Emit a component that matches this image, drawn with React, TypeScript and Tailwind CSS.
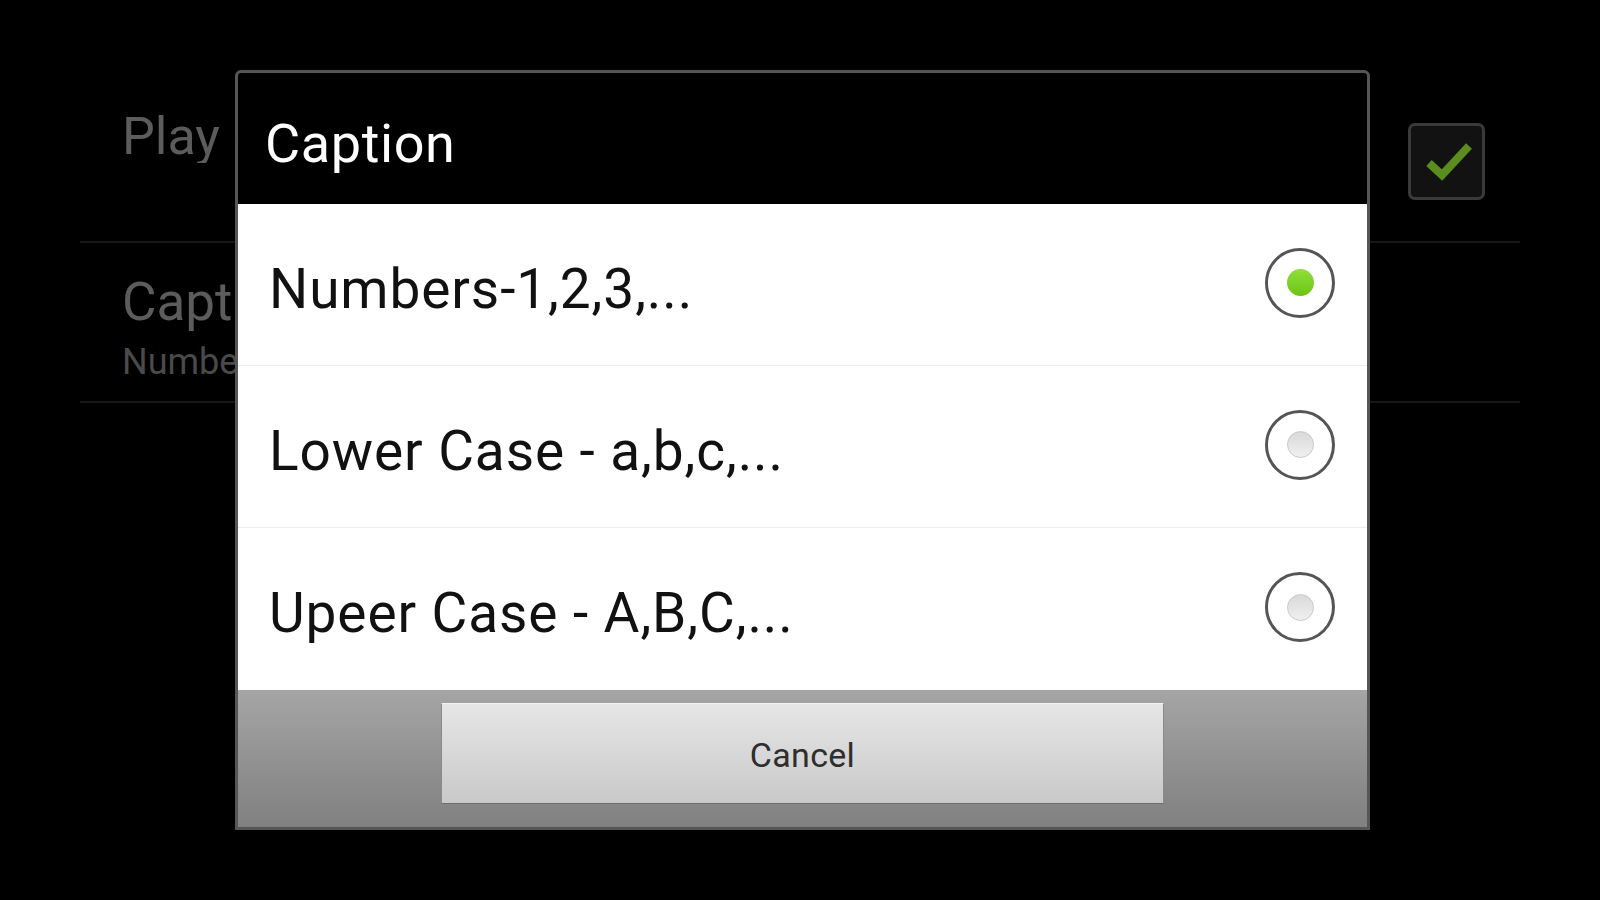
import React from "react";

const options = ["Numbers-1,2,3,...", "Lower Case - a,b,c,...", "Upeer Case - A,B,C,..."];

function Radio({ checked }: { checked: boolean }) {
  return (
    <div className="flex h-[70px] w-[70px] items-center justify-center rounded-full border-[3px] border-[#555] bg-white">
      {checked ? (
        <div className="h-[27px] w-[27px] rounded-full bg-gradient-to-b from-[#8fe03a] to-[#6cc410]" />
      ) : (
        <div className="h-[27px] w-[27px] rounded-full border border-[#c8c8c8] bg-gradient-to-b from-[#d9d9d9] to-[#f0f0f0]" />
      )}
    </div>
  );
}

function CheckBox() {
  return (
    <div className="flex h-[77px] w-[77px] items-center justify-center rounded-[7px] border-[3px] border-[#3a3a3a] bg-[#121212]">
      <svg width="71" height="71" viewBox="0 0 71 71">
        <polyline
          points="18,37 31,49 58,20"
          fill="none"
          stroke="#5a8c1e"
          strokeWidth="8"
          strokeLinejoin="miter"
        />
      </svg>
    </div>
  );
}

export default function App() {
  const selected = 0;
  return (
    <div className="relative h-[900px] w-[1600px] overflow-hidden bg-black font-['Roboto',sans-serif]">
      {/* settings list underneath the dialog */}
      <div className="px-[80px] pt-[82px]">
        <div className="flex h-[161px] items-start justify-between border-b-2 border-[#161616] pl-[42px] pr-[35px]">
          <div className="mt-[29px] w-[113px] overflow-hidden whitespace-nowrap">
            <p className="text-[52px] leading-none text-[#5c5c5c]">Play Sound</p>
          </div>
          <div className="mt-[41px]">
            <CheckBox />
          </div>
        </div>
        <div className="flex h-[160px] flex-col border-b-2 border-[#161616] pl-[42px]">
          <div className="w-[113px] overflow-hidden whitespace-nowrap">
            <p className="mt-[33px] text-[53px] leading-none text-[#5c5c5c]">Caption</p>
            <p className="mt-[15px] text-[36px] leading-none text-[#4a4a4a]">Numbers-1,2,3,...</p>
          </div>
        </div>
      </div>

      {/* dialog */}
      <div className="absolute left-[235px] top-[70px] flex h-[760px] w-[1135px] flex-col rounded-t-[6px] border-[3px] border-[#565656] bg-black">
        <div className="h-[131px] pl-[27px] pt-[44px]">
          <h2 className="text-[54px] leading-none tracking-[0.6px] text-white">Caption</h2>
        </div>
        <div className="bg-white">
          {options.map((label, i) => (
            <div
              key={label}
              className={`flex h-[162px] items-center justify-between pl-[31px] pr-[32px] ${
                i < options.length - 1 ? "border-b border-[#ececec]" : ""
              }`}
            >
              <span className="pt-[9px] text-[55px] leading-none tracking-[0.9px] text-[#111]">{label}</span>
              <div className="-mt-[4px]">
                <Radio checked={i === selected} />
              </div>
            </div>
          ))}
        </div>
        <div className="flex flex-1 justify-center bg-gradient-to-b from-[#a5a5a5] to-[#808080] pt-[13px]">
          <button className="h-[101px] w-[723px] border border-[#8a8a8a] border-b-[#6e6e6e] border-t-[#f2f2f2] bg-gradient-to-b from-[#e6e6e6] to-[#c9c9c9] pt-[3px] text-[34px] tracking-[0.3px] text-[#2e2e2e]">
            Cancel
          </button>
        </div>
      </div>
    </div>
  );
}
